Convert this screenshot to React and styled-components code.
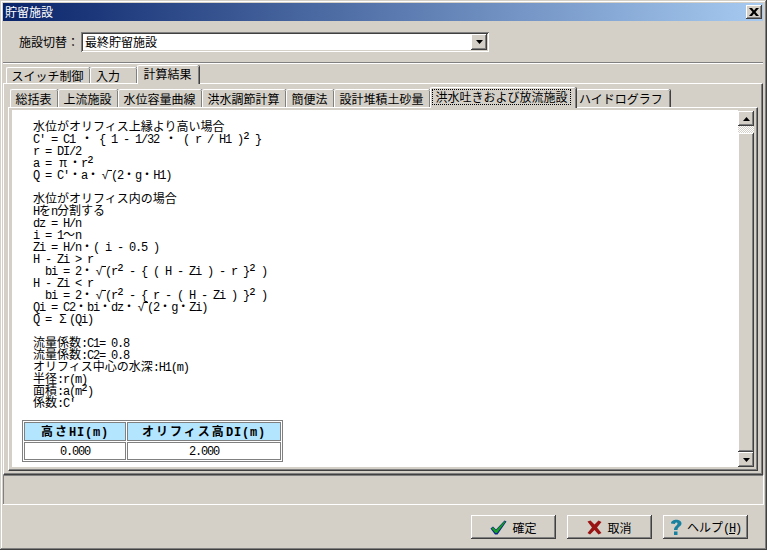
import React from 'react'
import styled, { createGlobalStyle } from 'styled-components'

const GlobalStyle = createGlobalStyle`
  html, body { margin: 0; padding: 0; background: #d4d0c8; }
  body {
    font-family: "Noto Sans CJK JP", "Liberation Sans", sans-serif;
    font-size: 12px;
    color: #000;
  }
`

const Window = styled.div`
  width: 767px;
  height: 550px;
  box-sizing: border-box;
  padding: 3px 4px 0 3px;
  display: flex;
  flex-direction: column;
  background: #d4d0c8;
  overflow: hidden;
  box-shadow: inset -1px -1px 0 #404040, inset 1px 1px 0 #d4d0c8, inset -2px -2px 0 #808080, inset 2px 2px 0 #fff;
`

const TitleBar = styled.div`
  height: 18px;
  flex: none;
  display: flex;
  align-items: center;
  justify-content: space-between;
  padding: 0 1px 0 2px;
  color: #fff;
  line-height: 18px;
  background: linear-gradient(90deg, #0a246a, #a6caf0);
`

const CloseButton = styled.div`
  width: 16px;
  height: 14px;
  background: #d4d0c8;
  display: flex;
  align-items: center;
  justify-content: center;
  box-shadow: inset -1px -1px 0 #404040, inset 1px 1px 0 #fff, inset -2px -2px 0 #808080;
`

const SwitchBar = styled.div`
  height: 42px;
  flex: none;
  display: flex;
  align-items: center;
  padding: 0 0 0 16px;
  box-sizing: border-box;
  border-bottom: 1px solid #808080;
  box-shadow: 0 1px 0 #fff;
`

const SwitchLabel = styled.div`
  width: 62px;
`

const Combo = styled.div`
  width: 408px;
  height: 20px;
  box-sizing: border-box;
  padding: 2px;
  display: flex;
  background: #fff;
  box-shadow: inset 1px 1px 0 #808080, inset -1px -1px 0 #fff, inset 2px 2px 0 #404040, inset -2px -2px 0 #d4d0c8;
`

const ComboText = styled.div`
  flex: 1;
  padding-left: 2px;
  line-height: 16px;
`

const ArrowButton = styled.div`
  width: 16px;
  height: ${p => p.$h || 16}px;
  flex: none;
  background: #d4d0c8;
  display: flex;
  align-items: center;
  justify-content: center;
  box-shadow: inset -1px -1px 0 #404040, inset 1px 1px 0 #fff, inset -2px -2px 0 #808080;
`

const TabRow = styled.div`
  display: flex;
  align-items: flex-end;
  height: ${p => p.$h}px;
  flex: none;
  padding-left: ${p => p.$left}px;
  position: relative;
  z-index: 1;
`

const Tab = styled.div`
  box-sizing: border-box;
  height: ${p => (p.$active ? p.$h + 3 : p.$h)}px;
  width: ${p => p.$w}px;
  flex: none;
  display: flex;
  align-items: center;
  justify-content: center;
  white-space: nowrap;
  line-height: 14px;
  padding-bottom: ${p => (p.$active ? 2 : 0)}px;
  padding-right: ${p => p.$pr ?? (p.$active ? 4 : 2)}px;
  background: #d4d0c8;
  border-top: 1px solid #fff;
  border-left: 1px solid #fff;
  border-radius: 2px 2px 0 0;
  box-shadow: inset -1px 0 0 #808080, 1px 0 0 #404040;
  margin-bottom: ${p => (p.$active ? -1 : 0)}px;
  position: relative;
  z-index: ${p => (p.$active ? 2 : 1)};
`

const FocusLabel = styled.span`
  outline: 1px dotted #000;
  padding: 0 2px;
`

const OuterPanel = styled.div`
  flex: none;
  height: 392px;
  box-sizing: border-box;
  padding: 5px 4px 0 4px;
  border-top: 1px solid #fff;
  border-left: 1px solid #fff;
  border-right: 1px solid #404040;
  border-bottom: 1px solid #404040;
  box-shadow: inset -1px -1px 0 #808080;
`

const InnerPanel = styled.div`
  height: 364px;
  box-sizing: border-box;
  padding: 2px 3px 0 3px;
  border-top: 1px solid #fff;
  border-left: 1px solid #fff;
  border-right: 1px solid #404040;
  border-bottom: 1px solid #404040;
  box-shadow: inset -1px -1px 0 #808080;
  display: flex;
`

const Sheet = styled.div`
  flex: 1;
  height: 357px;
  background: #fff;
  box-sizing: border-box;
  padding: 10px 0 0 10px;
  display: flex;
  flex-direction: column;
`

const Doc = styled.div`
  margin-left: 11px;
`

const Line = styled.div`
  height: 12px;
  line-height: 12px;
  white-space: pre;
  font-size: 12px;
`

const Half = styled.span`
  font-family: "Liberation Mono", monospace;
  font-size: 12px;
  letter-spacing: -1.2px;
`

const Wide = styled.span`
  display: inline-block;
  width: 12px;
  text-align: center;
  font-family: "Liberation Sans", sans-serif;
`

// root sign with the short bar that runs on to the bracket
const Root = styled(Wide)`
  position: relative;
  &::after {
    content: "";
    position: absolute;
    top: 1px;
    right: -1px;
    width: 4px;
    border-top: 1px solid #000;
  }
`

// the square hangs out to the left of its half width cell
const Square = styled.span`
  display: inline-block;
  width: 6px;
  direction: rtl;
  line-height: 12px;
  font-family: "Liberation Sans", sans-serif;
  font-size: 16px;
`

const FormulaTable = styled.table`
  border-collapse: separate;
  border-spacing: 1px;
  border: 1px solid #808080;
  margin-top: 12px;
  width: 261px;
  height: 41px;
  table-layout: fixed;
`

const HeadCell = styled.th`
  box-sizing: border-box;
  background: #b3e5ff;
  border: 1px solid #808080;
  height: 19px;
  padding: 0;
  font-weight: 700;
  letter-spacing: 2px;
  line-height: 14px;
  ${Half} { letter-spacing: 0.8px; }
`

const ValueCell = styled.td`
  box-sizing: border-box;
  background: #fff;
  border: 1px solid #808080;
  height: 17px;
  padding: 0;
  text-align: center;
  line-height: 14px;
`

const Scrollbar = styled.div`
  width: 16px;
  height: 356px;
  flex: none;
  padding-top: 1px;
  display: flex;
  flex-direction: column;
`

const ScrollTrack = styled.div`
  height: 7px;
  flex: none;
  background: repeating-conic-gradient(#d4d0c8 0 25%, #fff 0 50%) 0 0 / 2px 2px;
`

const ScrollThumb = styled.div`
  flex: 1;
  background: #d4d0c8;
  box-shadow: inset -1px -1px 0 #404040, inset 1px 1px 0 #fff, inset -2px -2px 0 #808080;
`

const StatusBar = styled.div`
  height: 30px;
  flex: none;
  box-sizing: border-box;
  margin-right: -1px;
  box-shadow: inset -1px -1px 0 #fff, inset 1px 1px 0 #808080;
`

const Footer = styled.div`
  flex: 1;
  display: flex;
  justify-content: flex-end;
  gap: 11px;
  padding: 10px 15px 0 0;
`

const Button = styled.div`
  width: 85px;
  height: 24px;
  box-sizing: border-box;
  display: flex;
  align-items: center;
  justify-content: center;
  gap: 5px;
  background: #d4d0c8;
  box-shadow: inset -1px -1px 0 #404040, inset 1px 1px 0 #fff, inset -2px -2px 0 #808080;
`

const ButtonLabel = styled.span`
  white-space: nowrap;
`

const Mnemonic = styled.span`
  text-decoration: underline;
`

// half width ascii and the few symbols that sit on their own cell
const mixed = text =>
  text.split(/([\x20-\x7e]+|[π√Σ²])/).map((part, i) => {
    if (/^[\x20-\x7e]+$/.test(part)) return <Half key={i}>{part}</Half>
    if (part === '²') return <Square key={i}>{part}</Square>
    if (part === '√') return <Root key={i}>{part}</Root>
    if (/^[πΣ]$/.test(part)) return <Wide key={i}>{part}</Wide>
    return part
  })

const lines = [
  '水位がオリフィス上縁より高い場合',
  "C' = C1 ・ { 1 - 1/32 ・ ( r / H1 )² }",
  'r = DI/2',
  'a = π・r²',
  "Q = C'・a・√(2・g・H1)",
  '',
  '水位がオリフィス内の場合',
  'Hをn分割する',
  'dz = H/n',
  'i = 1～n',
  'Zi = H/n・( i - 0.5 )',
  'H - Zi > r',
  '  bi = 2・√(r² - { ( H - Zi ) - r }² )',
  'H - Zi < r',
  '  bi = 2・√(r² - { r - ( H - Zi ) }² )',
  'Qi = C2・bi・dz・√(2・g・Zi)',
  'Q = Σ(Qi)',
  '',
  '流量係数:C1= 0.8',
  '流量係数:C2= 0.8',
  'オリフィス中心の水深:H1(m)',
  '半径:r(m)',
  '面積:a(m²)',
  "係数:C'",
]

const topTabs = [
  { label: 'スイッチ制御', w: 84 },
  { label: '入力', w: 47, pr: 12 },
  { label: '計算結果', w: 62, pr: 2, active: true },
]

const subTabs = [
  { label: '総括表', w: 48 },
  { label: '上流施設', w: 60 },
  { label: '水位容量曲線', w: 84 },
  { label: '洪水調節計算', w: 84 },
  { label: '簡便法', w: 48 },
  { label: '設計堆積土砂量', w: 96 },
  { label: '洪水吐きおよび放流施設', w: 146, active: true },
  { label: 'ハイドログラフ', w: 94, pr: 5 },
]

const Arrow = ({ up }) => (
  <svg width="7" height="4" viewBox="0 0 7 4">
    <path d={up ? 'M3.5 0L7 4H0z' : 'M0 0h7L3.5 4z'} fill="#000" />
  </svg>
)

const App = () => (
  <Window>
    <GlobalStyle />
    <TitleBar>
      貯留施設
      <CloseButton>
        <svg width="10" height="8" viewBox="0 0 10 8">
          <path d="M0 0h3l2 2.500L7 0h3L6.500 4 10 8H7L5 5.500 3 8H0l3.500-4z" fill="#000" />
        </svg>
      </CloseButton>
    </TitleBar>
    <SwitchBar>
      <SwitchLabel>施設切替：</SwitchLabel>
      <Combo>
        <ComboText>最終貯留施設</ComboText>
        <ArrowButton><Arrow /></ArrowButton>
      </Combo>
    </SwitchBar>
    <TabRow $h={20} $left={3}>
      {topTabs.map(t => (
        <Tab key={t.label} $w={t.w} $h={16} $pr={t.pr} $active={t.active}>{t.label}</Tab>
      ))}
    </TabRow>
    <OuterPanel>
      <TabRow $h={18} $left={2}>
        {subTabs.map(t => (
          <Tab key={t.label} $w={t.w} $h={18} $pr={t.pr} $active={t.active}>
            {t.active ? <FocusLabel>{t.label}</FocusLabel> : t.label}
          </Tab>
        ))}
      </TabRow>
      <InnerPanel>
        <Sheet>
          <Doc>
            {lines.map((l, i) => <Line key={i}>{mixed(l)}</Line>)}
          </Doc>
          <FormulaTable>
            <colgroup>
              <col width="102" />
              <col width="154" />
            </colgroup>
            <tbody>
              <tr>
                <HeadCell>{mixed('高さHI(m)')}</HeadCell>
                <HeadCell>{mixed('オリフィス高DI(m)')}</HeadCell>
              </tr>
              <tr>
                <ValueCell><Half>0.000</Half></ValueCell>
                <ValueCell><Half>2.000</Half></ValueCell>
              </tr>
            </tbody>
          </FormulaTable>
        </Sheet>
        <Scrollbar>
          <ArrowButton $h={15}><Arrow up /></ArrowButton>
          <ScrollTrack />
          <ScrollThumb />
          <ArrowButton $h={15}><Arrow /></ArrowButton>
        </Scrollbar>
      </InnerPanel>
    </OuterPanel>
    <StatusBar />
    <Footer>
      <Button>
        <svg width="17" height="15" viewBox="0 0 17 15">
          <path d="M0.500 8.500L3 6.500 6 9.500 14.500 0.500 16.500 1.500 7.500 14.500H5z" fill="#0a2a8a" />
          <path d="M1.500 8.500L3 7.200 6 10.200 14.500 1.200 15.500 1.800 7 13H5.500z" fill="#14a01e" />
        </svg>
        <ButtonLabel>確定</ButtonLabel>
      </Button>
      <Button>
        <svg width="15" height="15" viewBox="0 0 15 15">
          <path d="M0.500 1.500L3.500 0.500 7.500 4.500 11.500 0.500 14.500 2 10 7.500 14.500 13 11.500 14.500 7.500 10 3 14.500 0.500 13 5 7.500z" fill="#9a1414" />
        </svg>
        <ButtonLabel>取消</ButtonLabel>
      </Button>
      <Button>
        <svg width="12" height="16" viewBox="0 0 12 16">
          <path d="M1 4.500C1 -0.500 11.500 -0.500 11.500 4.500 11.500 7.500 7.500 7.500 7.500 11H4C4 7 7.500 7 7.500 4.500 7.500 3 5 3 5 5z" fill="#17819f" />
          <rect x="4" y="12.500" width="3.500" height="3.500" fill="#17819f" />
        </svg>
        <ButtonLabel>ヘルプ<Half>(<Mnemonic>H</Mnemonic>)</Half></ButtonLabel>
      </Button>
    </Footer>
  </Window>
)

export default App
